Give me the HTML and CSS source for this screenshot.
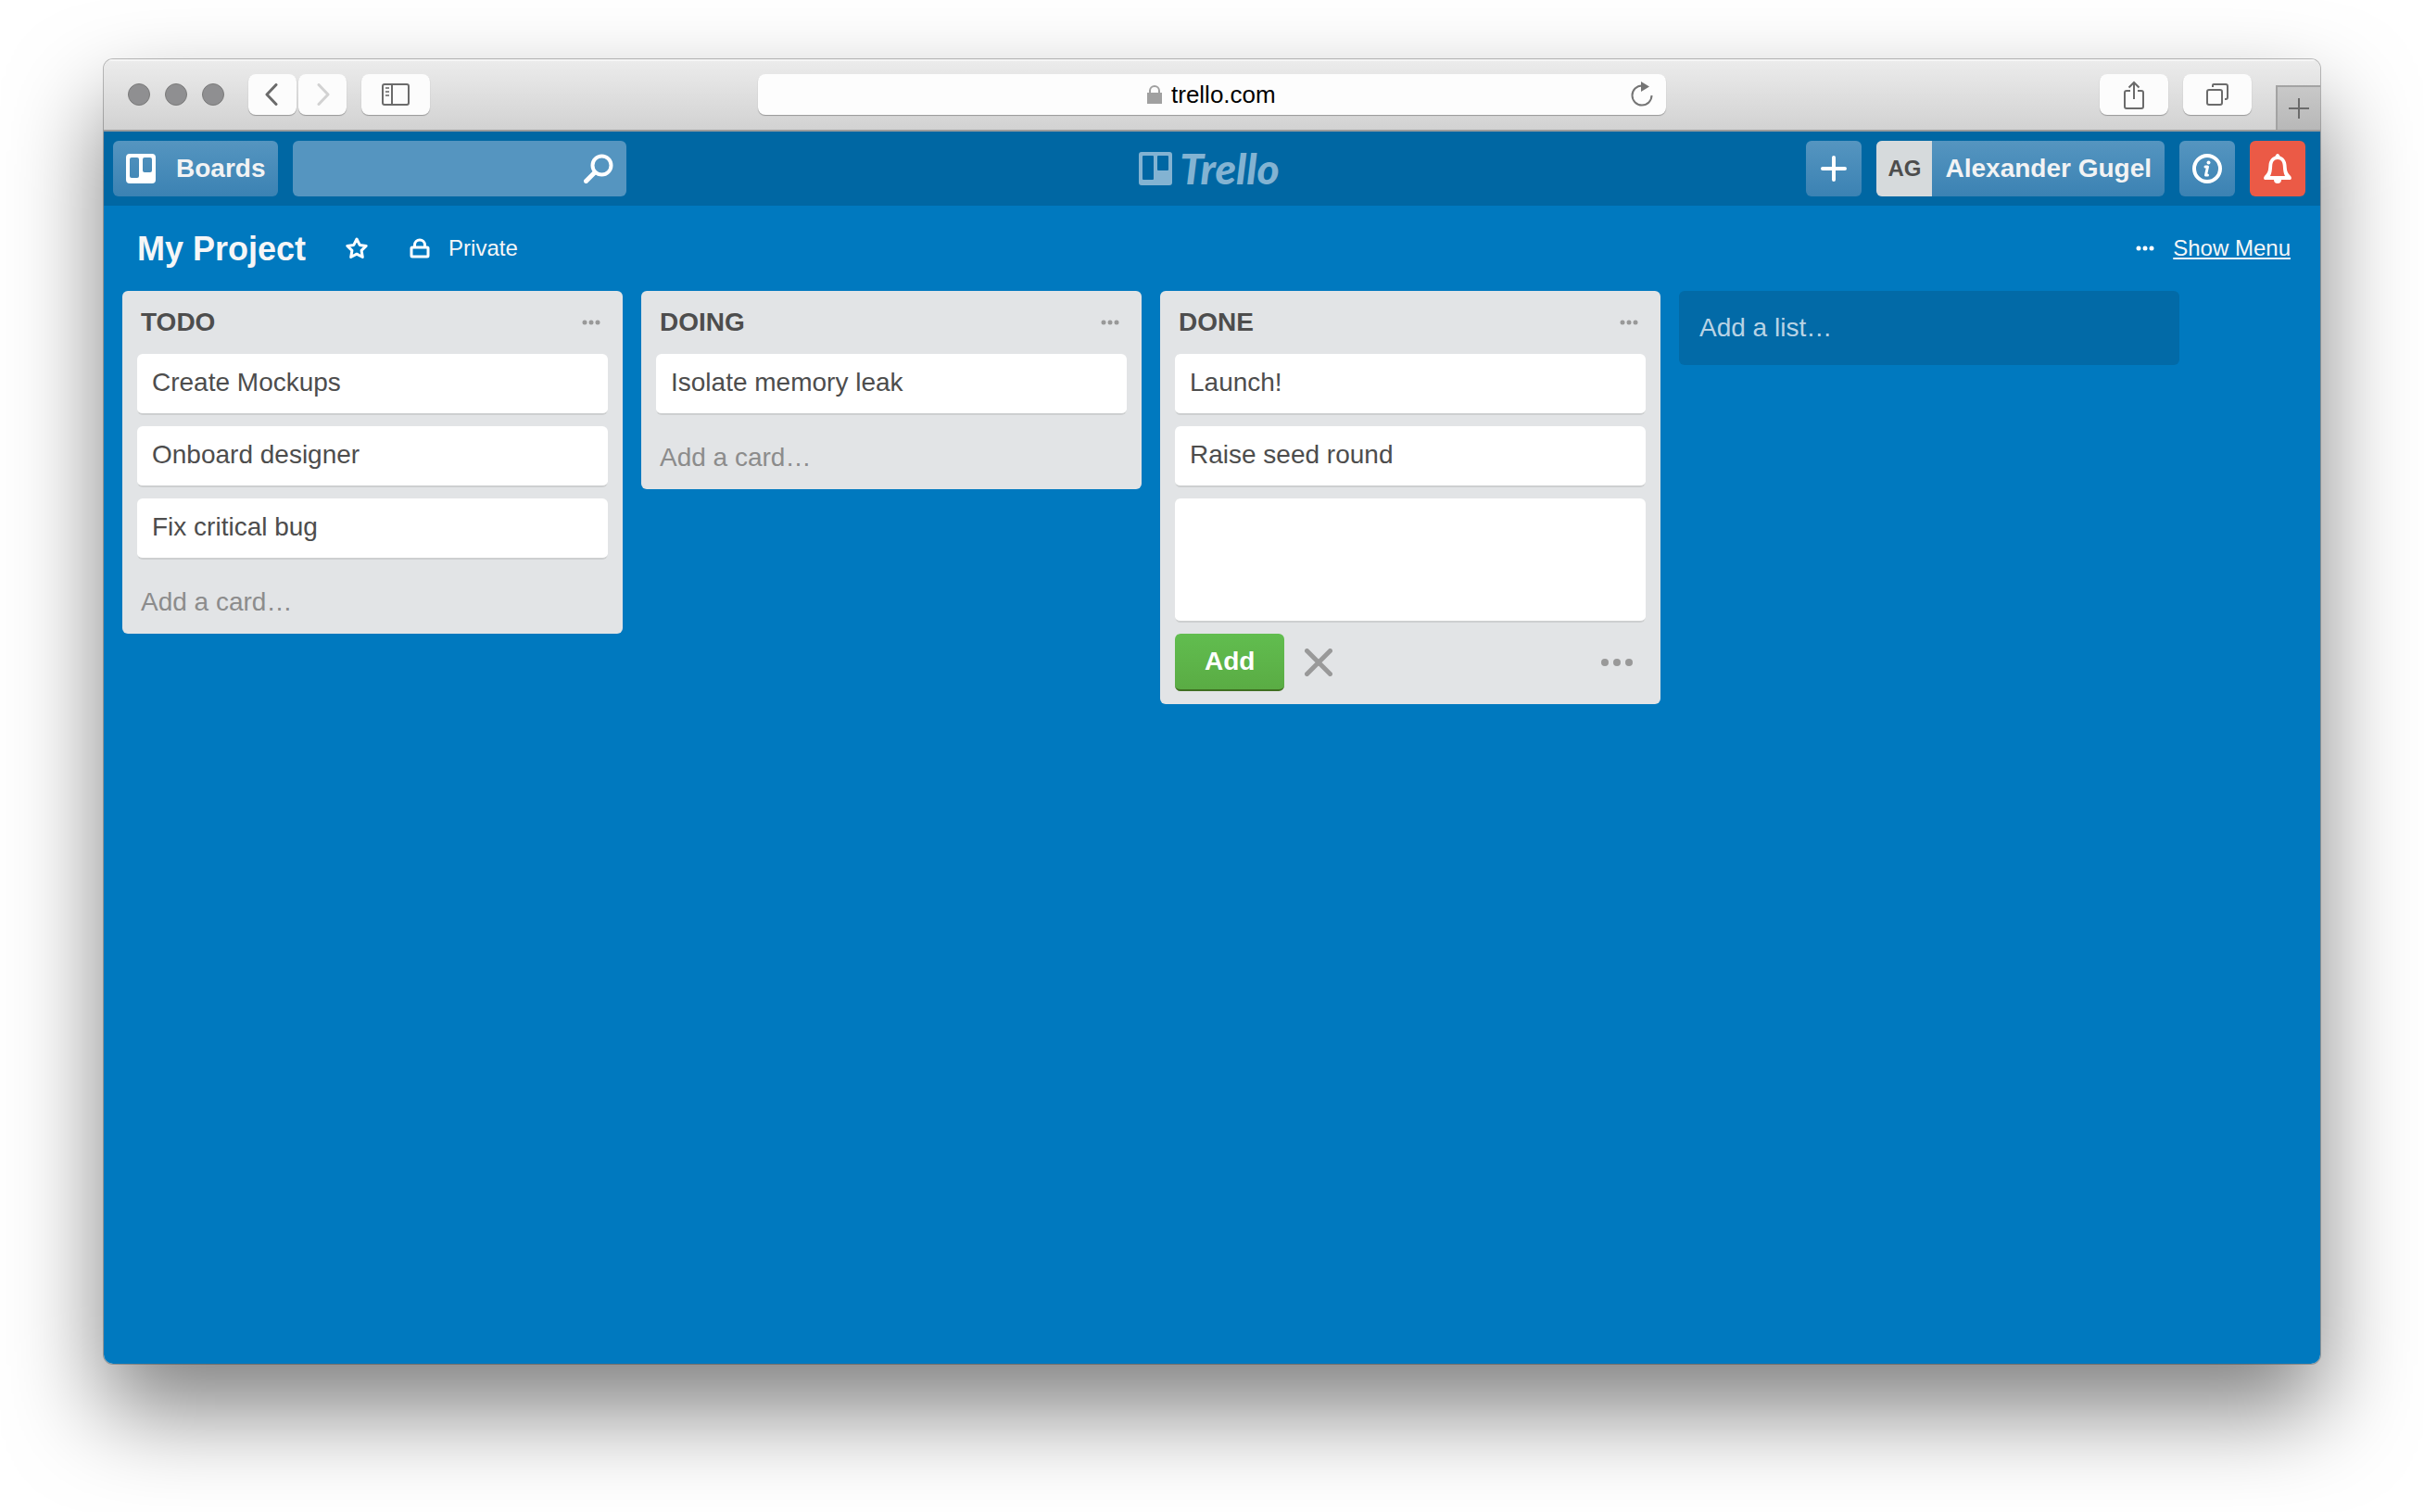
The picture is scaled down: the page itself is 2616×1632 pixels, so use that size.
FILE: index.html
```html
<!DOCTYPE html>
<html lang="en">
<head>
  <meta charset="UTF-8">
  <meta name="viewport" content="width=device-width, initial-scale=1">
  <title>My Project | Trello</title>
  <link rel="stylesheet" href="styles.css">
</head>
<body>

<div class="window">
  <div class="toolbar">
    <div class="toolbar-left">
      <div class="lights">
        <span class="light"></span>
        <span class="light"></span>
        <span class="light"></span>
      </div>
      <div class="nav-buttons">
        <button class="tool-btn nav-btn" aria-label="Back">
          <svg width="16" height="24" viewBox="0 0 16 24"><path d="M12 1.500 2 12l10 10.500" fill="none" stroke="#6b6b6b" stroke-width="3" stroke-linecap="round" stroke-linejoin="round"/></svg>
        </button>
        <button class="tool-btn nav-btn" aria-label="Forward" disabled>
          <svg width="16" height="24" viewBox="0 0 16 24"><path d="M4 1.500 14 12 4 22.500" fill="none" stroke="#d2d2d2" stroke-width="3" stroke-linecap="round" stroke-linejoin="round"/></svg>
        </button>
      </div>
      <button class="tool-btn" aria-label="Sidebar">
        <svg width="30" height="24" viewBox="0 0 30 24" fill="none" stroke="#6b6b6b" stroke-width="2"><rect x="1" y="1" width="28" height="22" rx="2"/><path d="M11 1v22"/><path d="M4 5h4M4 9h4M4 13h4" stroke="#8a8a8a"/></svg>
      </button>
    </div>

    <div class="url-bar">
      <label class="url">
        <svg width="16" height="20" viewBox="0 0 16 20"><path d="M3 9V6a5 5 0 0 1 10 0v3" fill="none" stroke="#a0a0a0" stroke-width="2"/><path d="M0 8h16v12H0z" fill="#a0a0a0"/></svg>
        <input class="url-input" type="text" value="trello.com" aria-label="Address">
      </label>
      <button class="reload" aria-label="Reload">
        <svg width="24" height="28" viewBox="0 0 24 28"><path d="M12 4.500A10.500 10.500 0 1 0 22.500 15" fill="none" stroke="#757575" stroke-width="2"/><path d="M11 0l9 5.500-9 5.500z" fill="#757575"/></svg>
      </button>
    </div>

    <div class="toolbar-right">
      <button class="tool-btn" aria-label="Share">
        <svg width="22" height="32" viewBox="0 0 22 32" fill="none" stroke="#6b6b6b" stroke-width="2"><path d="M7 12H3a2 2 0 0 0-2 2v15a2 2 0 0 0 2 2h16a2 2 0 0 0 2-2V14a2 2 0 0 0-2-2h-4M11 21V3M5.500 8.500 11 3l5.500 5.500"/></svg>
      </button>
      <button class="tool-btn" aria-label="Show all tabs">
        <svg width="24" height="24" viewBox="0 0 24 24" fill="none" stroke="#6b6b6b" stroke-width="2"><rect x="1" y="7" width="16" height="16" rx="2"/><path d="M7 4V2q0-1 1-1h13q2 0 2 2v12q0 2-2 2h-1"/></svg>
      </button>
      <button class="new-tab" aria-label="New tab">
        <svg width="22" height="22" viewBox="0 0 22 22"><path d="M11 0v22M0 11h22" stroke="#6b6b6b" stroke-width="2"/></svg>
      </button>
    </div>
  </div>

  <header class="header">
    <div class="header-left">
      <button class="header-btn boards-btn">
        <svg width="32" height="32" viewBox="0 0 32 32"><path fill="#fff" fill-rule="evenodd" d="M4 0h24a4 4 0 0 1 4 4v24a4 4 0 0 1-4 4H4a4 4 0 0 1-4-4V4a4 4 0 0 1 4-4zm2 4a2 2 0 0 0-2 2v18a2 2 0 0 0 2 2h6a2 2 0 0 0 2-2V6a2 2 0 0 0-2-2zm14 0a2 2 0 0 0-2 2v12a2 2 0 0 0 2 2h6a2 2 0 0 0 2-2V6a2 2 0 0 0-2-2z"/></svg>
        Boards
      </button>
      <div class="search">
        <input class="search-input" type="text" aria-label="Search">
        <button class="search-btn" aria-label="Search">
          <svg width="32" height="32" viewBox="0 0 32 32" fill="none" stroke="#fff" stroke-linecap="round"><circle cx="19.500" cy="12.500" r="10" stroke-width="4"/><path d="M11 21l-8.500 8.500" stroke-width="5"/></svg>
        </button>
      </div>
    </div>

    <a class="logo" href="#">
      <svg width="36" height="36" viewBox="0 0 36 36"><path fill="currentColor" fill-rule="evenodd" d="M3 0h30a3 3 0 0 1 3 3v30a3 3 0 0 1-3 3H3a3 3 0 0 1-3-3V3a3 3 0 0 1 3-3zm2 4a1 1 0 0 0-1 1v24a1 1 0 0 0 1 1h10a1 1 0 0 0 1-1V5a1 1 0 0 0-1-1zm16 0a1 1 0 0 0-1 1v14a1 1 0 0 0 1 1h10a1 1 0 0 0 1-1V5a1 1 0 0 0-1-1z"/></svg>
      <span>Trello</span>
    </a>

    <div class="header-right">
      <button class="header-btn icon-btn" aria-label="Create">
        <svg width="28" height="28" viewBox="0 0 28 28"><path d="M14 2v24M2 14h24" stroke="#fff" stroke-width="4" stroke-linecap="round"/></svg>
      </button>
      <button class="header-btn member">
        <span class="avatar">AG</span>
        <span class="member-name">Alexander Gugel</span>
      </button>
      <button class="header-btn icon-btn" aria-label="Information">
        <svg width="32" height="32" viewBox="0 0 32 32" fill="none" stroke="#fff"><circle cx="16" cy="16" r="14" stroke-width="4"/><path d="M14 14h2.500l-2 9h2" stroke-width="3" stroke-linecap="round" stroke-linejoin="round"/><circle cx="17.500" cy="9.500" r="2" fill="#fff" stroke="none"/></svg>
      </button>
      <button class="header-btn icon-btn bell" aria-label="Notifications">
        <svg width="32" height="32" viewBox="0 0 32 32"><path fill="#fff" fill-rule="evenodd" d="M16 0c1.500 0 2 1.500 2.500 2.500C23 4 25 7.500 25.500 12c.5 6 .5 8 4.500 12 1.500 2 1 4-1 4h-9a4 4 0 0 1-8 0H3c-2 0-2.500-2-1-4C6 20 6 18 6.500 12 7 7.500 9 4 13.500 2.500 14 1.500 14.500 0 16 0zm0 6c-4 0-5.500 3-5.800 7-.3 5-.7 8-2.200 11h16c-1.500-3-1.900-6-2.200-11C21.500 9 20 6 16 6z"/></svg>
      </button>
    </div>
  </header>

  <main class="board">
    <div class="board-header">
      <h1 class="board-title">My Project</h1>
      <button class="board-btn star" aria-label="Star board">
        <svg width="26" height="26" viewBox="0 0 26 26"><path d="M13 3l3.200 6.400 7 1-5.100 5 1.200 7.100L13 19.200l-6.300 3.300 1.200-7.100-5.100-5 7-1z" fill="none" stroke="#fff" stroke-width="3" stroke-linejoin="round"/></svg>
      </button>
      <button class="board-btn">
        <svg width="22" height="22" viewBox="0 0 22 22" fill="none" stroke="#fff" stroke-width="3"><rect x="2" y="10" width="18" height="10" rx="1"/><path d="M5.500 10V7.500a5.500 5.500 0 0 1 11 0V10"/></svg>
        Private
      </button>
      <div class="menu">
        <svg width="20" height="6" viewBox="0 0 20 6" fill="#fff"><circle cx="3" cy="3" r="2.500"/><circle cx="10" cy="3" r="2.500"/><circle cx="17" cy="3" r="2.500"/></svg>
        <a class="menu-link" href="#">Show Menu</a>
      </div>
    </div>

    <div class="lists">
      <section class="list">
        <div class="list-header">
          <h2 class="list-title">TODO</h2>
          <button class="list-menu" aria-label="List actions">
            <svg width="20" height="6" viewBox="0 0 20 6"><circle cx="3" cy="3" r="2.500"/><circle cx="10" cy="3" r="2.500"/><circle cx="17" cy="3" r="2.500"/></svg>
          </button>
        </div>
        <div class="cards">
          <a class="card" href="#">Create Mockups</a>
          <a class="card" href="#">Onboard designer</a>
          <a class="card" href="#">Fix critical bug</a>
        </div>
        <a class="add-card" href="#">Add a card…</a>
      </section>

      <section class="list">
        <div class="list-header">
          <h2 class="list-title">DOING</h2>
          <button class="list-menu" aria-label="List actions">
            <svg width="20" height="6" viewBox="0 0 20 6"><circle cx="3" cy="3" r="2.500"/><circle cx="10" cy="3" r="2.500"/><circle cx="17" cy="3" r="2.500"/></svg>
          </button>
        </div>
        <div class="cards">
          <a class="card" href="#">Isolate memory leak</a>
        </div>
        <a class="add-card" href="#">Add a card…</a>
      </section>

      <section class="list">
        <div class="list-header">
          <h2 class="list-title">DONE</h2>
          <button class="list-menu" aria-label="List actions">
            <svg width="20" height="6" viewBox="0 0 20 6"><circle cx="3" cy="3" r="2.500"/><circle cx="10" cy="3" r="2.500"/><circle cx="17" cy="3" r="2.500"/></svg>
          </button>
        </div>
        <div class="cards">
          <a class="card" href="#">Launch!</a>
          <a class="card" href="#">Raise seed round</a>
          <textarea class="card composer" aria-label="New card"></textarea>
        </div>
        <div class="composer-controls">
          <button class="add-btn">Add</button>
          <button class="cancel" aria-label="Cancel">
            <svg width="30" height="30" viewBox="0 0 30 30"><path d="M2.500 2.500l25 25M27.500 2.500l-25 25" stroke="#999" stroke-width="5" stroke-linecap="round"/></svg>
          </button>
          <button class="composer-menu" aria-label="Options">
            <svg width="34" height="8" viewBox="0 0 34 8" fill="#999"><circle cx="4" cy="4" r="4"/><circle cx="17" cy="4" r="4"/><circle cx="30" cy="4" r="4"/></svg>
          </button>
        </div>
      </section>

      <button class="add-list">Add a list…</button>
    </div>
  </main>
</div>

</body>
</html>
```
FILE: styles.css
```css
* {
  box-sizing: border-box;
}

body {
  margin: 0;
  min-height: 100vh;
  padding: 64px 112px 160px;
  display: flex;
  background: #fff;
  color: #4d4d4d;
  font-family: "Liberation Sans", Helvetica, Arial, sans-serif;
  font-size: 28px;
  line-height: 36px;
}

button,
input,
textarea {
  margin: 0;
  padding: 0;
  border: 0;
  background: none;
  color: inherit;
  font: inherit;
}

a {
  color: inherit;
  text-decoration: none;
}

svg {
  display: block;
  flex: none;
}

.window {
  flex: 1;
  display: flex;
  flex-direction: column;
  min-width: 0;
  overflow: hidden;
  border-radius: 10px;
  box-shadow: 0 0 0 1px rgba(0, 0, 0, 0.25), 0 50px 100px rgba(0, 0, 0, 0.5);
}

/* browser toolbar */

.toolbar {
  display: grid;
  grid-template-columns: 1fr minmax(0, 980px) 1fr;
  height: 78px;
  background: linear-gradient(#ececec, #d2d2d2);
  border-bottom: 2px solid #9c9c9c;
  box-shadow: inset 0 2px #f5f5f5;
}

.toolbar-left,
.toolbar-right {
  display: flex;
  align-items: center;
  gap: 16px;
}

.toolbar-left {
  padding-left: 26px;
}

.toolbar-right {
  justify-content: flex-end;
}

.lights {
  display: flex;
  gap: 16px;
  margin-right: 10px;
}

.light {
  width: 24px;
  height: 24px;
  border: 1px solid #7a7a7a;
  border-radius: 50%;
  background: #8f8f91;
}

.nav-buttons {
  display: flex;
  gap: 2px;
}

.tool-btn {
  display: flex;
  align-items: center;
  justify-content: center;
  width: 74px;
  height: 44px;
  border-radius: 8px;
  background: #fcfcfc;
  box-shadow: 0 1px 1px rgba(0, 0, 0, 0.3);
}

.nav-btn {
  width: 52px;
}

.url-bar {
  display: grid;
  grid-template-columns: 1fr auto 1fr;
  align-items: center;
  align-self: center;
  height: 44px;
  border-radius: 8px;
  background: #fdfdfd;
  box-shadow: 0 1px 1px rgba(0, 0, 0, 0.3);
}

.url {
  grid-column: 2;
  display: flex;
  align-items: center;
  gap: 10px;
}

.url-input {
  width: 114px;
  color: #000;
  font-size: 26px;
}

.reload {
  justify-self: end;
  padding-right: 14px;
}

.new-tab {
  display: flex;
  align-items: center;
  justify-content: center;
  align-self: flex-end;
  width: 48px;
  height: 48px;
  margin-left: 10px;
  border: 2px solid #a3a3a3;
  border-width: 2px 0 0 2px;
  background: linear-gradient(#c8c8c8, #b8b8b8);
}

/* trello header */

.header {
  display: grid;
  grid-template-columns: 1fr auto 1fr;
  align-items: center;
  padding: 10px 16px 10px 10px;
  background: #0067a3;
  color: #f2f3f4;
}

.header-left,
.header-right {
  display: flex;
  gap: 16px;
}

.header-right {
  justify-content: flex-end;
}

.header-btn {
  display: flex;
  align-items: center;
  height: 60px;
  border-radius: 6px;
  background: linear-gradient(#5595c0, #3b82b3);
  font-weight: bold;
}

.boards-btn {
  gap: 22px;
  padding: 0 14px;
}

.search {
  display: flex;
  align-items: center;
  width: 360px;
  height: 60px;
  border-radius: 6px;
  background: #5595c0;
}

.search-input {
  flex: 1;
  min-width: 0;
  height: 100%;
  padding-left: 16px;
}

.search-btn {
  padding-right: 14px;
}

.logo {
  display: flex;
  align-items: center;
  gap: 8px;
  color: #83b3d2;
  font-family: Lato, "Liberation Sans", sans-serif;
  font-size: 46px;
  font-style: italic;
  font-weight: 900;
}

.icon-btn {
  justify-content: center;
  width: 60px;
}

.member {
  overflow: hidden;
}

.avatar {
  width: 60px;
  background: #d6dadc;
  color: #4d4d4d;
  font-size: 24px;
  line-height: 60px;
}

.member-name {
  padding: 0 14px;
}

.bell {
  background: #eb5a46;
}

/* board */

.board {
  flex: 1;
  padding: 16px 20px 20px;
  background: #0079bf;
}

.board-header {
  display: flex;
  align-items: center;
  height: 60px;
  margin-bottom: 16px;
  padding: 0 12px 0 16px;
  color: #f5f6f7;
  font-size: 24px;
}

.board-title {
  margin: 0 42px 0 0;
  padding-top: 2px;
  font-size: 36px;
}

.board-btn {
  display: flex;
  align-items: center;
  gap: 20px;
}

.star {
  margin-right: 44px;
}

.menu {
  display: flex;
  align-items: center;
  gap: 20px;
  margin-left: auto;
}

.menu-link {
  text-decoration: underline;
}

.lists {
  display: flex;
  align-items: flex-start;
  gap: 20px;
}

.list {
  flex: 0 1 540px;
  min-width: 0;
  border-radius: 6px;
  background: #e2e4e6;
}

.list-header {
  display: flex;
  align-items: center;
  justify-content: space-between;
  padding: 16px 24px 16px 20px;
}

.list-title {
  margin: 0;
  font-size: 28px;
}

.list-menu {
  fill: #999;
}

.cards {
  display: flex;
  flex-direction: column;
  gap: 12px;
  padding: 0 16px 12px;
}

.card {
  padding: 13px 16px 15px;
  border-bottom: 2px solid #cdcfd0;
  border-radius: 6px;
  background: #fff;
}

.add-card {
  display: block;
  padding: 16px 20px 14px;
  margin-bottom: 2px;
  color: #8c8c8c;
}

.composer {
  height: 134px;
  resize: none;
}

.composer-controls {
  display: flex;
  align-items: center;
  padding: 0 20px 14px 16px;
}

.add-btn {
  height: 62px;
  padding: 0 32px;
  border-bottom: 2px solid #3f6f21;
  border-radius: 6px;
  background: linear-gradient(#61bd4f, #5aac44);
  color: #fff;
  font-weight: bold;
}

.cancel {
  margin-left: 22px;
}

.composer-menu {
  margin-left: auto;
  padding-right: 10px;
}

.add-list {
  flex: 0 1 540px;
  min-width: 0;
  height: 80px;
  padding: 0 22px;
  border-radius: 6px;
  background: #026aa7;
  color: #b8d3e5;
  text-align: left;
}
```
